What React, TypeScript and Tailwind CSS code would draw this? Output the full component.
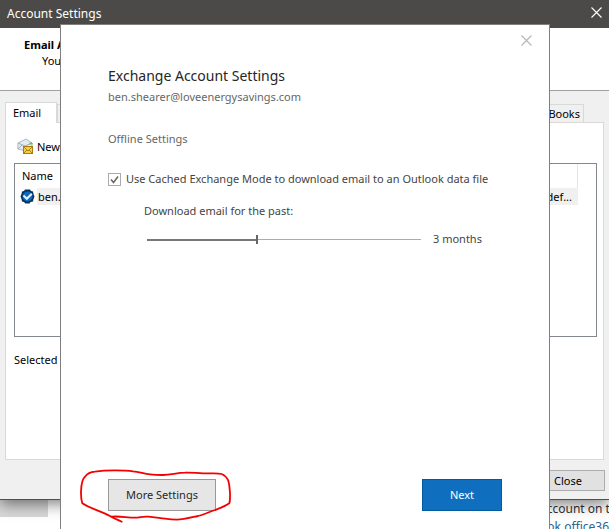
import { useState } from "react";

function CloseIcon() {
  return (
    <svg width="11" height="11" viewBox="0 0 11 11" fill="none" stroke="currentColor" strokeWidth="1.1" aria-hidden="true">
      <path d="M.5.5l10 10M10.5.5l-10 10" />
    </svg>
  );
}

function NewMailIcon() {
  return (
    <svg width="16" height="17" viewBox="0 0 16 17" aria-hidden="true">
      <path d="M1 5L9 1l6 4v7l-6 1L.8 11z" fill="#e4eaf0" stroke="#9ba8b5" strokeWidth=".8" />
      <path d="M1 5l7 3 7-3M1 11l4-4" fill="none" stroke="#9ba8b5" strokeWidth=".9" />
      <path d="M12.5 5.500h3" stroke="#5fc74b" strokeWidth="1.800" />
      <rect x="6.500" y="8.500" width="9" height="7" fill="#f3cf4a" stroke="#a87b13" />
      <path d="M7 9l4 4 4-4M7 15l3-3M15 15l-3-3" fill="none" stroke="#a87b13" strokeWidth=".9" />
    </svg>
  );
}

function DefaultIcon() {
  return (
    <svg width="15" height="15" viewBox="0 0 15 15" aria-hidden="true">
      <path d="M5 .5h5l1 1.500 2 .5.500 2.500 1 2.500-1 2.500-.5 2.500-2.500.5L9.500 14.500h-4L4 13l-2-.5-.5-2.500-1-2.500 1-2.500L2 2.500 4 2z" fill="#06325e" />
      <circle cx="7.500" cy="7.500" r="5" fill="#0e69b8" />
      <path d="M3.500 6.500l3.300 3.300 5-5" fill="none" stroke="#e6f3ff" strokeWidth="2" />
    </svg>
  );
}

function RedCircle() {
  return (
    <svg className="pointer-events-none absolute -top-3.5 -left-8" width="160" height="62" viewBox="76 465 160 62" fill="none" aria-hidden="true">
      <path
        d="M121.700 521.700C117 519.500 113 518 110 516C101 511 89 508 82.300 503.300C80.800 499 81 496 81 491.700C81.200 485 82 479 85 476.700C87 474 91 472 95 471.700C102 470.500 108 470.300 115 470.300C121 470.300 127 470.300 133 471.300C139 472 144 473.500 150 474.300C155 475 159 475 163 475C171 475 177 472.700 185 472.700C192 472.300 197 473.300 203 473.300C210 473.800 217 472.800 221.700 474C225 475.500 227 477.500 228.300 480.700C229.700 485 229.700 489 230 493.300C230 497 230.300 501 229.300 503.300C225 506.500 220 508 215 510C209 512 204 514.500 198 516C191 517.500 184 519.500 176.700 519.700C172 519.700 169 519.300 165 518.700C159 518 154 517.300 148 516.700C143 516.200 140 517.600 135 517.700C127 517.700 120 515.800 111.700 516.700"
        stroke="#f50000" strokeWidth="1.800" strokeLinecap="round" strokeLinejoin="round"
      />
    </svg>
  );
}

function AccountWindow() {
  return (
    <section className="relative flex h-[500px] flex-col border-b border-[#505050] bg-[#f0f0f0] text-black shadow-[0_4px_14px_rgba(0,0,0,0.5)]">
      <header className="flex h-7 shrink-0 items-center justify-between bg-[#4b4a48] px-[7px] text-[12px] text-white">
        <h1>Account Settings</h1>
        <button type="button" aria-label="Close window" className="mb-1"><CloseIcon /></button>
      </header>
      <div className="h-[63px] shrink-0 border-b border-[#a0a0a0] bg-white pt-[9px] pl-6 leading-4">
        <h2 className="font-bold">Email A</h2>
        <p className="pl-[18px]">You</p>
      </div>
      <div className="flex grow flex-col px-[5px] pt-[11px]">
        <div role="tablist" className="flex items-end justify-between">
          <div className="flex items-end">
            <button type="button" role="tab" aria-selected="true" className="relative z-10 -mb-px h-[21px] w-[52px] border border-b-0 border-[#d9d9d9] bg-white pr-2">Email</button>
            <button type="button" role="tab" aria-selected="false" aria-label="Data files" className="h-[18px] w-20 border border-b-0 border-[#d9d9d9]" />
          </div>
          <button type="button" role="tab" aria-selected="false" className="mr-5 h-[18px] w-24 border border-b-0 border-[#d9d9d9] pr-[3px] text-right">Books</button>
        </div>
        <div className="flex h-[338px] flex-col border border-[#d9d9d9] bg-white pt-[15px] pr-1.5 pl-2">
          <button type="button" className="flex items-center gap-1 self-start pl-[3px]"><NewMailIcon />New</button>
          <div className="mt-2 h-[174px] border border-[#828790] pr-[18px]">
            <table className="w-full border-separate border-spacing-0 text-left">
              <thead>
                <tr className="h-6">
                  <th className="pl-[7px] font-normal">Name</th>
                  <th className="border-r border-[#e5e5e5]" />
                </tr>
              </thead>
              <tbody>
                <tr className="h-[17px]">
                  <td className="p-0">
                    <div className="flex items-center gap-[2px] pl-[5px]"><DefaultIcon /><span className="grow bg-[#f0f0f0] pl-px leading-[17px]">ben.</span></div>
                  </td>
                  <td className="bg-[#f0f0f0] p-0 pr-1.5 text-right leading-[17px]">def...</td>
                </tr>
              </tbody>
            </table>
          </div>
          <p className="mt-[15px]">Selected</p>
        </div>
        <button type="button" className="mt-[10px] mr-[-1px] h-[21px] w-[74px] self-end border border-[#adadad] bg-[#e1e1e1]">Close</button>
      </div>
    </section>
  );
}

function ExchangeDialog() {
  const [cached, setCached] = useState(true);
  const [period, setPeriod] = useState(2);
  return (
    <section role="dialog" aria-label="Exchange Account Settings" className="relative flex w-[490px] flex-col border border-b-0 border-[#7f7f7f] bg-white px-[47px] text-[#444]">
      <button type="button" aria-label="Close dialog" className="-mr-[30px] mt-[10px] self-end text-[#b5b5b5]"><CloseIcon /></button>
      <h2 className="mt-5 text-[14px] leading-5 text-[#262626]">Exchange Account Settings</h2>
      <p className="mt-[3px] text-[#666]">ben.shearer@loveenergysavings.com</p>
      <h3 className="mt-[26px] text-[#666]">Offline Settings</h3>
      <div className="mt-6 flex items-center gap-[5px]">
        <span className="relative flex">
          <input id="cached" type="checkbox" checked={cached} onChange={(e) => setCached(e.target.checked)} className="size-[13px] appearance-none border border-[#ababab] bg-white" />
          {cached && (
            <svg className="pointer-events-none absolute inset-0" width="13" height="13" viewBox="0 0 13 13" fill="none" stroke="#666" strokeWidth="1.500" aria-hidden="true">
              <path d="M3 6.500l2.500 3L10 3.500" />
            </svg>
          )}
        </span>
        <label htmlFor="cached">Use Cached Exchange Mode to download email to an Outlook data file</label>
      </div>
      <label htmlFor="period" className="mt-4 pl-9">Download email for the past:</label>
      <div className="mt-3 flex items-center gap-3 pl-[39px]">
        <input
          id="period" type="range" min="0" max="5" value={period} onChange={(e) => setPeriod(Number(e.target.value))}
          className="h-[9px] w-[274px] appearance-none bg-[linear-gradient(#777,#777),linear-gradient(#ababab,#ababab)] bg-[length:40%_2px,100%_1px] bg-[position:0_4px,0_4px] bg-no-repeat [&::-webkit-slider-thumb]:h-[9px] [&::-webkit-slider-thumb]:w-0.5 [&::-webkit-slider-thumb]:appearance-none [&::-webkit-slider-thumb]:bg-[#666]"
        />
        <output htmlFor="period">3 months</output>
      </div>
      <div className="mt-auto mb-[18px] flex justify-between">
        <div className="relative">
          <button type="button" className="h-8 w-[108px] border border-[#999] bg-[#e6e6e6] text-[#262626]">More Settings</button>
          <RedCircle />
        </div>
        <button type="button" className="h-8 w-20 border border-[#005a9e] bg-[#106ebe] text-white">Next</button>
      </div>
    </section>
  );
}

export default function App() {
  return (
    <main className="relative h-screen overflow-hidden bg-white font-['Noto_Sans','Open_Sans',sans-serif] text-[11px] leading-4">
      <AccountWindow />
      <div className="flex items-start justify-between">
        <div className="h-[17px] w-12 bg-[#d8d8d8]" />
        <div className="w-[69px] text-[12px] leading-[18px] whitespace-nowrap text-[#333]">
          <p>account on t</p>
          <a href="#office" className="text-[#2a6496]">ook.office36</a>
        </div>
      </div>
      <div className="absolute inset-x-0 top-6 bottom-0 flex justify-center pl-px">
        <ExchangeDialog />
      </div>
    </main>
  );
}
